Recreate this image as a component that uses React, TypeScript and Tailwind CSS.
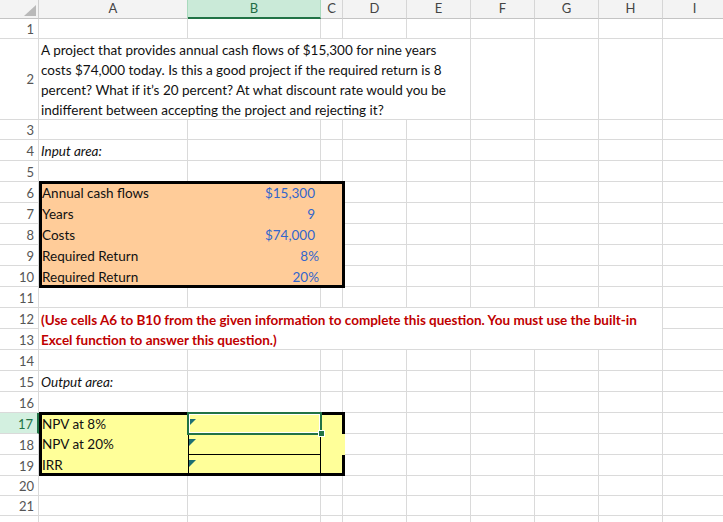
import React from "react";

const REST = ["w-16", "w-16", "w-16", "w-16", "w-16", "w-16"];

function RH({ n, h, active, center }: { n?: number; h: string; active?: boolean; center?: boolean }) {
  return (
    <div
      className={`${h} w-[39px] shrink-0 flex ${center ? "items-center" : "items-end"} justify-end pr-[4px] text-[13px] leading-[18px] ${
        active
          ? "bg-[#d3f0e0] text-[#217346] border-b border-b-[#dadada] border-r-2 border-r-[#217346]"
          : "bg-white text-[#555] border-b border-r border-[#dadada]"
      }`}
    >
      {n}
    </div>
  );
}

function C({ w, children, className = "" }: { w: string; children?: React.ReactNode; className?: string }) {
  return <div className={`${w} shrink-0 h-full border-r border-b border-[#dadada] ${className}`}>{children}</div>;
}

function PlainRow({ n, h, a, italic }: { n?: number; h: string; a?: string; italic?: boolean }) {
  return (
    <div className={`flex ${h}`}>
      <RH n={n} h="h-full" />
      <C w="w-[149px]" className={`flex items-end pl-[2px] leading-[18px] whitespace-nowrap ${italic ? "italic" : ""}`}>
        {a}
      </C>
      <C w="w-[133px]" />
      <C w="w-[22px]" />
      {REST.map((w, i) => (
        <C key={i} w={w} />
      ))}
    </div>
  );
}

function RestRows({ count, first }: { count: number; first: string }) {
  return (
    <div className="flex flex-col">
      {Array.from({ length: count }).map((_, r) => (
        <div key={r} className="flex h-[21px]">
          <C w={first} />
          {REST.slice(1).map((w, i) => (
            <C key={i} w={w} />
          ))}
        </div>
      ))}
    </div>
  );
}

function Flag() {
  return (
    <svg width="7" height="7" viewBox="0 0 7 7" className="block">
      <polygon points="0,0 7,0 0,7" fill="#1d6f72" />
    </svg>
  );
}

export default function App() {
  const inputs: [string, string, string][] = [
    ["Annual cash flows", "$15,300", "pr-[6px]"],
    ["Years", "9", "pr-[6px]"],
    ["Costs", "$74,000", "pr-[6px]"],
    ["Required Return", "8%", "pr-[2px]"],
    ["Required Return", "20%", "pr-[2px]"],
  ];
  return (
    <div className="relative w-[723px] h-[522px] overflow-hidden bg-white text-[13.5px] text-[#111] font-[Lato,'Liberation_Sans',sans-serif]">
      {/* column header */}
      <div className="flex h-[19px] bg-[#f3f3f3] text-[13px] text-[#444]">
        <div className="w-[39px] shrink-0 flex items-end justify-end pr-[2px] pb-[2px] border-r border-b border-[#cfcfcf] border-b-[#c4c4c4]">
          <svg width="12" height="11" viewBox="0 0 12 11" className="block">
            <polygon points="12,0 12,11 0,11" fill="#b9b9b9" />
          </svg>
        </div>
        <div className="w-[149px] shrink-0 flex items-center justify-center border-r border-b border-r-[#a9d9bd] border-b-[#c4c4c4]">A</div>
        <div className="w-[133px] shrink-0 flex items-center justify-center bg-[#caead8] text-[#1f6c43] border-r border-r-[#a9d9bd] border-b-2 border-b-[#217346]">
          B
        </div>
        <div className="w-[22px] shrink-0 flex items-center justify-center border-r border-b border-[#d5d5d5] border-b-[#c4c4c4]">C</div>
        {["D", "E", "F", "G", "H", "I"].map((l) => (
          <div key={l} className="w-16 shrink-0 flex items-center justify-center border-r border-b border-[#d5d5d5] border-b-[#c4c4c4]">
            {l}
          </div>
        ))}
      </div>

      <PlainRow n={1} h="h-[20px]" />

      {/* row 2 merged A:E */}
      <div className="flex h-[81px]">
        <RH n={2} h="h-full" center />
        <C w="w-[432px]" className="pl-[2px] pt-px leading-[20px] whitespace-nowrap">
          A project that provides annual cash flows of $15,300 for nine years
          <br />
          costs $74,000 today. Is this a good project if the required return is 8
          <br />
          percent? What if it’s 20 percent? At what discount rate would you be
          <br />
          indifferent between accepting the project and rejecting it?
        </C>
        {REST.slice(2).map((w, i) => (
          <C key={i} w={w} />
        ))}
      </div>

      <PlainRow n={3} h="h-[20px]" />
      <PlainRow n={4} h="h-[21px]" a="Input area:" italic />
      <PlainRow n={5} h="h-[21px]" />

      {/* input box rows 6-10 */}
      <div className="flex h-[105px]">
        <div className="w-[39px] shrink-0 flex flex-col">
          {[6, 7, 8, 9, 10].map((n) => (
            <RH key={n} n={n} h="h-[21px]" />
          ))}
        </div>
        <div className="relative z-10 -mt-px w-[306px] h-[107px] shrink-0 border-[3px] border-black bg-[#ffcc99]">
          <div className="-mt-[3px] flex flex-col">
            {inputs.map(([label, value, pr], i) => (
              <div key={i} className="flex h-[21px] items-end leading-[18px] whitespace-nowrap">
                <div className="w-[146px] shrink-0">{label}</div>
                <div className={`w-[133px] shrink-0 text-right text-[#3366cc] ${pr}`}>{value}</div>
              </div>
            ))}
          </div>
        </div>
        <RestRows count={5} first="w-[62px]" />
      </div>

      <PlainRow n={11} h="h-[21px]" />

      {/* rows 12-13 merged A:H */}
      <div className="flex h-[42px]">
        <div className="w-[39px] shrink-0 flex flex-col">
          <RH n={12} h="h-[21px]" />
          <RH n={13} h="h-[21px]" />
        </div>
        <C w="w-[624px]" className="pl-[2px] pt-[2px] leading-[20px] font-bold text-[#c00000] whitespace-nowrap">
          (Use cells A6 to B10 from the given information to complete this question. You must use the built-in
          <br />
          Excel function to answer this question.)
        </C>
        <div className="w-16 shrink-0 flex flex-col">
          <div className="h-[21px] border-r border-b border-[#dadada]" />
          <div className="h-[21px] border-r border-b border-[#dadada]" />
        </div>
      </div>

      <PlainRow n={14} h="h-[21px]" />
      <PlainRow n={15} h="h-[21px]" a="Output area:" italic />
      <PlainRow n={16} h="h-[21px]" />

      {/* output box rows 17-19 */}
      <div className="flex h-[63px]">
        <div className="w-[39px] shrink-0 flex flex-col">
          <RH n={17} h="h-[21px]" active />
          <RH n={18} h="h-[21px]" />
          <RH n={19} h="h-[21px]" />
        </div>
        <div className="relative z-10 -mt-px w-[306px] h-[64px] shrink-0 border-l-[3px] border-t-[3px] border-b-[3px] border-black bg-[#ffff99] flex flex-col leading-[18px] whitespace-nowrap">
          <div className="flex h-[19px]">
            <div className="w-[146px] shrink-0">NPV at 8%</div>
            <div className="w-[133px] shrink-0 border-l border-r border-b border-black pt-[4px]">
              <Flag />
            </div>
            <div className="w-[24px] shrink-0 border-r-[3px] border-black" />
          </div>
          <div className="flex h-[21px]">
            <div className="w-[146px] shrink-0 pt-px">NPV at 20%</div>
            <div className="w-[133px] shrink-0 border-l border-r border-b border-black pt-[5px]">
              <Flag />
            </div>
            <div className="w-[24px] shrink-0 border-r-[3px] border-[#ffff99]" />
          </div>
          <div className="flex h-[18px]">
            <div className="w-[146px] shrink-0 pt-px">IRR</div>
            <div className="w-[133px] shrink-0 border-l border-r border-black pt-[5px]">
              <Flag />
            </div>
            <div className="w-[24px] shrink-0 border-r-[3px] border-black" />
          </div>
        </div>
        <RestRows count={3} first="w-[62px]" />
      </div>

      <PlainRow n={20} h="h-[20px]" />
      <PlainRow n={21} h="h-[20px]" />
      <PlainRow h="h-[21px]" />

      {/* active cell selection B17 */}
      <div className="absolute left-[187px] top-[412px] w-[135px] h-[23px] z-20 border-2 border-[#217346]">
        <div className="w-full h-full border border-white" />
      </div>
      <div className="absolute left-[318px] top-[430px] w-[7px] h-[7px] z-30 bg-[#217346] border border-white" />
    </div>
  );
}
